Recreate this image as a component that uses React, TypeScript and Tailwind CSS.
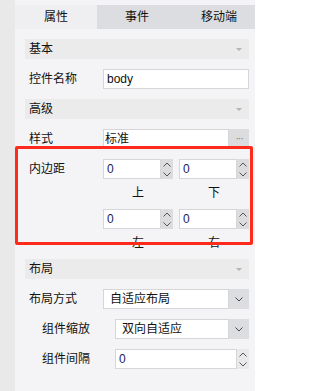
import React from 'react'

const font = { fontFamily: '"Liberation Sans", "Noto Sans CJK SC", sans-serif' }

function SectionHeader({ title }: { title: string }) {
  return (
    <div className="flex h-[20px] items-center justify-between bg-[#ebebec] pl-[4px] pr-[7px]">
      <span className="text-[12px] leading-[20px] text-[#111]">{title}</span>
      <svg width="6" height="3" viewBox="0 0 6 3">
        <path d="M0 0h6L3 3z" fill="#b4b4b6" />
      </svg>
    </div>
  )
}

function ChevronUp() {
  return (
    <svg width="8" height="5" viewBox="0 0 8 5">
      <path d="M0.5 4.5L4 1l3.5 3.5" fill="none" stroke="#555" strokeWidth="1" />
    </svg>
  )
}

function ChevronDown({ color = '#555' }: { color?: string }) {
  return (
    <svg width="8" height="5" viewBox="0 0 8 5">
      <path d="M0.5 0.5L4 4l3.5-3.5" fill="none" stroke={color} strokeWidth="1" />
    </svg>
  )
}

function Row({ label, indent, children }: { label: string; indent?: boolean; children: React.ReactNode }) {
  return (
    <div className="flex h-[20px] items-center">
      <div className={`${indent ? 'w-[90px] pl-[17px]' : 'w-[78px] pl-[4px]'} text-[12px] leading-[20px] text-[#111]`}>
        {label}
      </div>
      <div className="flex h-full flex-1">{children}</div>
    </div>
  )
}

function TextBox({ value }: { value: string }) {
  return (
    <div className="flex h-full flex-1 items-center border border-[#d6d6d8] bg-white pl-[3px] text-[12px] text-[#111]">
      {value}
    </div>
  )
}

function Spinner({ value, light }: { value: string; light?: boolean }) {
  return (
    <div className="flex h-full flex-1">
      <div className="flex flex-1 items-center border border-[#d6d6d8] bg-white pl-[3px] text-[12px] text-[#1a1a5a]">
        {value}
      </div>
      <div
        className={`flex w-[12px] flex-col items-center justify-center gap-[5px] ${light ? 'bg-[#e9e9eb]' : 'bg-[#dcdcde]'}`}
      >
        <ChevronUp />
        <ChevronDown />
      </div>
    </div>
  )
}

function Select({ value }: { value: string }) {
  return (
    <div className="flex h-full flex-1">
      <div className="flex flex-1 items-center border border-[#d6d6d8] bg-white pl-[6px] text-[12px] text-[#111]">
        {value}
      </div>
      <div className="flex w-[20px] items-center justify-center bg-[#dcdde0]">
        <ChevronDown color="#444" />
      </div>
    </div>
  )
}

export default function App() {
  return (
    <div className="flex h-[391px] w-[255px] overflow-hidden" style={font}>
      <div className="w-[15px] bg-[#e9e9e9]" />
      <div className="relative flex-1 bg-[#f4f4f6] pt-[5px]">
        {/* Abas */}
        <div className="flex h-[24px] text-[12px] text-[#111]">
          <div className="flex w-[82px] items-center justify-center bg-[#efeff1]">属性</div>
          <div className="flex w-[80px] items-center justify-center bg-[#dcdde0]">事件</div>
          <div className="flex flex-1 items-center justify-center bg-[#dcdde0] pl-[6px]">移动端</div>
        </div>

        <div className="ml-[10px] mr-[6px] mt-[10px] flex flex-col">
          <SectionHeader title="基本" />
          <div className="mt-[10px]">
            <Row label="控件名称">
              <TextBox value="body" />
            </Row>
          </div>
          <div className="mt-[10px]">
            <SectionHeader title="高级" />
          </div>
          <div className="mt-[10px]">
            <Row label="样式">
              <div className="flex h-full flex-1 items-center border border-[#d6d6d8] bg-white pl-[1px] text-[12px] text-[#111]">
                标准
              </div>
              <div className="flex w-[20px] items-center justify-center bg-[#dcdcde] text-[10px] leading-none tracking-[-1px] text-[#777]">
                ···
              </div>
            </Row>
          </div>

          {/* Padding */}
          <div className="mt-[10px]">
            <Row label="内边距">
              <div className="flex h-full flex-1 gap-[6px]">
                <Spinner value="0" />
                <Spinner value="0" />
              </div>
            </Row>
          </div>
          <div className="flex h-[30px] pl-[78px] pt-[8px] text-[12px] leading-[12px] text-[#111]">
            <div className="flex-1 text-center">上</div>
            <div className="ml-[6px] flex-1 text-center">下</div>
          </div>
          <div className="flex h-[20px] gap-[6px] pl-[78px]">
            <Spinner value="0" />
            <Spinner value="0" />
          </div>
          <div className="flex h-[30px] pl-[78px] pt-[8px] text-[12px] leading-[12px] text-[#111]">
            <div className="flex-1 text-center">左</div>
            <div className="ml-[6px] flex-1 text-center">右</div>
          </div>

          <SectionHeader title="布局" />
          <div className="mt-[10px]">
            <Row label="布局方式">
              <Select value="自适应布局" />
            </Row>
          </div>
          <div className="mt-[10px]">
            <Row label="组件缩放" indent>
              <Select value="双向自适应" />
            </Row>
          </div>
          <div className="mt-[10px]">
            <Row label="组件间隔" indent>
              <Spinner value="0" light />
            </Row>
          </div>
        </div>

        {/* marcação vermelha */}
        <div className="pointer-events-none absolute left-0 top-[146px] h-[99px] w-[238px] rounded-[2px] border-[3px] border-[#ff2a1a]" />
      </div>
    </div>
  )
}
